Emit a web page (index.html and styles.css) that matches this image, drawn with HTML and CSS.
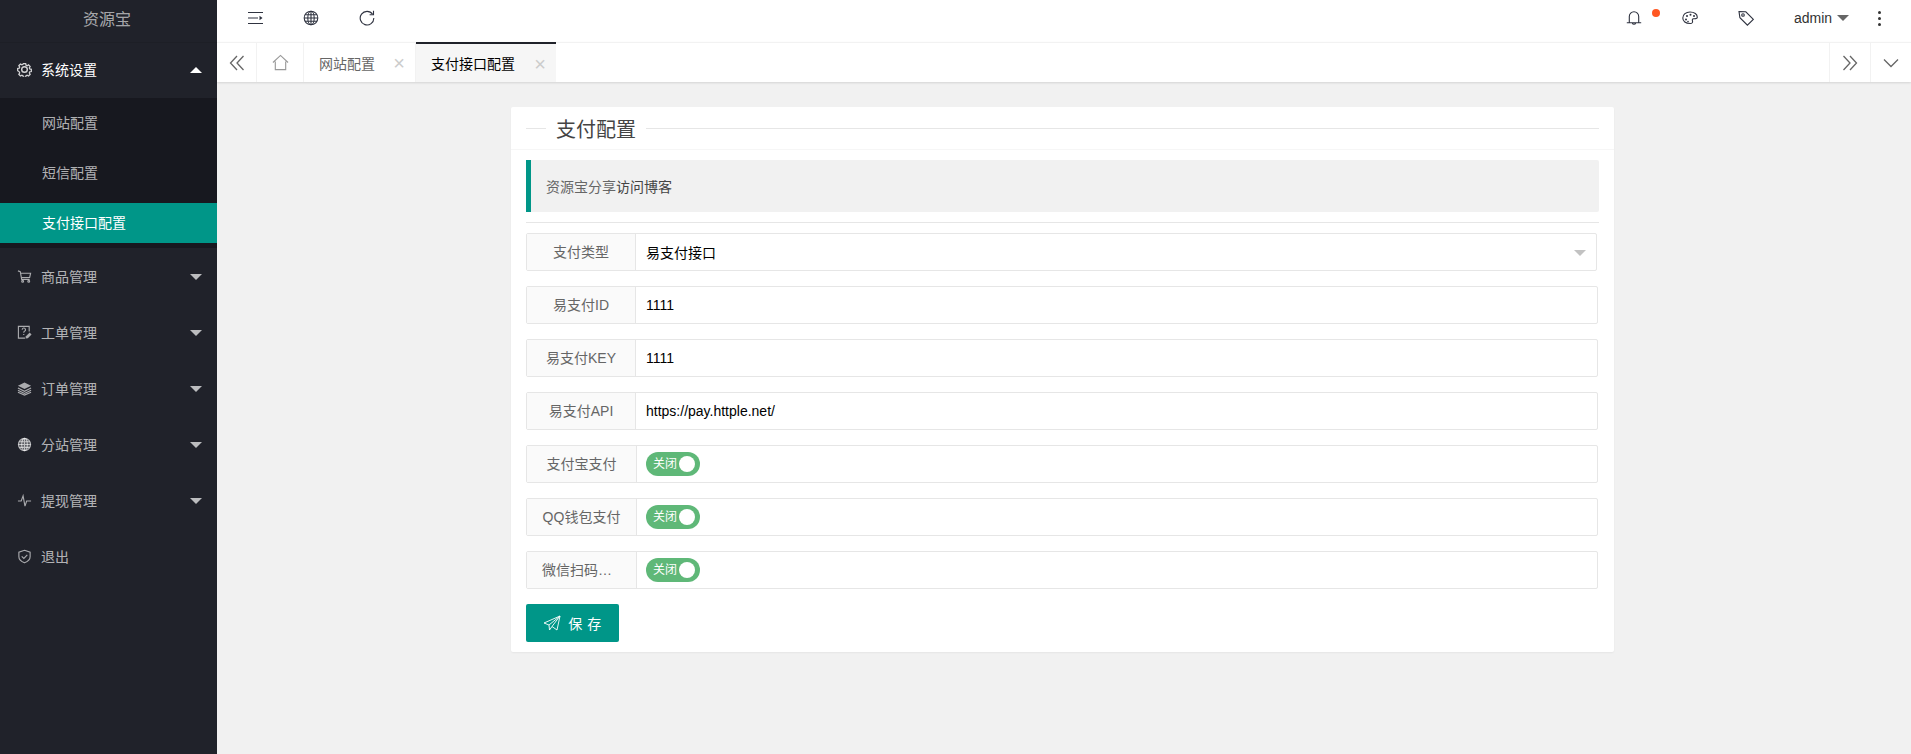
FILE: index.html
```html
<!DOCTYPE html>
<html lang="zh">
<head>
<meta charset="utf-8">
<title>支付接口配置</title>
<link rel="stylesheet" href="styles.css">
</head>
<body>
<div class="app">
  <aside class="side">
    <div class="brand">资源宝</div>
    <nav>
      <div class="nav-item open">
        <svg class="ni gear" viewBox="0 0 16 16"><path d="M6.600 1h2.800l.4 1.900 1.300.6 1.700-1 1.900 2-1 1.600.5 1.300 1.900.4v2.600l-1.900.4-.5 1.300 1 1.600-1.900 2-1.700-1-1.300.6-.4 1.900H6.600l-.4-1.900-1.300-.6-1.700 1-1.900-2 1-1.600-.5-1.300L-.1 9.400V6.800l1.900-.4.5-1.300-1-1.600 1.900-2 1.700 1 1.300-.6z" transform="translate(.8 .8) scale(.9)"/><circle cx="8" cy="8" r="3"/></svg>
        <span>系统设置</span><i class="tri up"></i>
      </div>
      <div class="sub">
        <div class="sub-item">网站配置</div>
        <div class="sub-item">短信配置</div>
        <div class="sub-item active"><span>支付接口配置</span></div>
      </div>
      <div class="nav-item">
        <svg class="ni" viewBox="0 0 16 16"><path d="M1 2l2.500.8L5 11h8.500M4 4.500h10.500L13.500 9H5"/><circle cx="6" cy="13" r="1"/><circle cx="12.500" cy="13" r="1"/></svg>
        <span>商品管理</span><i class="tri"></i>
      </div>
      <div class="nav-item">
        <svg class="ni" viewBox="0 0 16 16"><path d="M8.500 14H1.500V1.500h11.500V7"/><path d="M5.500 5a1.800 1.800 0 1 1 2.500 1.700c-.7.400-.8.800-.8 1.500M7.200 9.500v1.200"/><path class="fill" d="M9 14.500l.5-2.500 4-4 2 2-4 4z"/></svg>
        <span>工单管理</span><i class="tri"></i>
      </div>
      <div class="nav-item">
        <svg class="ni" viewBox="0 0 16 16"><path class="fill" d="M8 1.500l7 3.500-7 3.500L1 5z"/><path d="M1 7.500l7 3.500 7-3.500M1 9.800l7 3.500 7-3.500M1 12l7 3 7-3"/></svg>
        <span>订单管理</span><i class="tri"></i>
      </div>
      <div class="nav-item">
        <svg class="ni" viewBox="0 0 16 16"><circle class="fill-soft" cx="8" cy="8" r="6.500"/><ellipse cx="8" cy="8" rx="3" ry="6.500"/><path d="M1.500 8h13M2.500 5h11M2.500 11h11M8 1.500v13"/></svg>
        <span>分站管理</span><i class="tri"></i>
      </div>
      <div class="nav-item">
        <svg class="ni" viewBox="0 0 16 16"><path d="M1 8.500h3.500L6.500 3l2 11 1.800-5.500H15"/></svg>
        <span>提现管理</span><i class="tri"></i>
      </div>
      <div class="nav-item">
        <svg class="ni" viewBox="0 0 16 16"><path d="M8 1.300l6 2v5c0 3.200-2.800 5.200-6 6.400-3.200-1.200-6-3.200-6-6.400v-5z"/><path d="M5 7.800l2.300 2.200L11 6.300"/></svg>
        <span>退出</span>
      </div>
    </nav>
  </aside>

  <div class="main">
    <header class="top">
      <div class="top-left">
        <svg class="ti" viewBox="0 0 16 16"><path d="M1 2.500h15M1 8h10M1 13.500h15"/><path class="solid" d="M12.500 5.800L15.500 8l-3 2.200z"/></svg>
        <svg class="ti" viewBox="0 0 16 16"><circle cx="8" cy="8" r="6.800"/><ellipse cx="8" cy="8" rx="3.200" ry="6.800"/><path d="M1.200 8h13.600M2.200 4.700h11.600M2.200 11.300h11.600M8 1.200v13.600"/></svg>
        <svg class="ti" viewBox="0 0 16 16"><path d="M13.600 4.300A6.800 6.800 0 1 0 14.800 8"/><path d="M14.500 .8v3.900h-3.900"/></svg>
      </div>
      <div class="top-right">
        <span class="bell">
          <svg class="ti" viewBox="0 0 16 16"><path d="M3.300 12.500V6.500a4.700 4.700 0 0 1 9.400 0v6M.8 12.800h14.400M6.300 13a1.800 1.800 0 0 0 3.400 0"/></svg>
          <i class="dot"></i>
        </span>
        <svg class="ti" viewBox="0 0 16 16"><path d="M8 2c4.500 0 7.300 2.400 7.300 5.200 0 1.800-2.300 1.500-3.800 1.600-1.400.1-1.300 1.300-1 2.200.4 1.300-.3 2.500-2.300 2.500C3.500 13.500 .8 11.300.8 8 .8 4.500 4 2 8 2z"/><circle class="solid" cx="4" cy="9.500" r="1"/><circle class="solid" cx="5" cy="6" r="1"/><circle class="solid" cx="8.500" cy="4.800" r="1"/><circle class="solid" cx="12" cy="6" r="1"/><circle class="solid" cx="6" cy="11.500" r=".8"/></svg>
        <svg class="ti" viewBox="0 0 16 16"><path d="M1 1.500l6.800.3 7.500 7.500-5.900 5.900L1.900 7.700z"/><circle cx="5" cy="5" r="1.300"/></svg>
        <span class="user">admin<i class="caret"></i></span>
        <span class="more"><i></i><i></i><i></i></span>
      </div>
    </header>

    <div class="tabs">
      <button class="tab-btn first" type="button"><svg class="tb" viewBox="0 0 16 16"><path d="M8 1L1.500 8 8 15M14.500 1L8 8l6.500 7"/></svg></button>
      <button class="tab-btn home" type="button"><svg class="th" viewBox="0 0 18 18"><path d="M1 9l8-7.500L17 9M3.500 8v8.500h11V8"/></svg></button>
      <div class="tab"><span>网站配置</span><em>×</em></div>
      <div class="tab current"><span>支付接口配置</span><em>×</em></div>
      <div class="tabs-space"></div>
      <button class="tab-btn edge" type="button"><svg class="tb" viewBox="0 0 16 16"><path d="M1.500 1L8 8l-6.500 7M8 1l6.500 7L8 15"/></svg></button>
      <button class="tab-btn edge" type="button"><svg class="tb" viewBox="0 0 16 16"><path d="M1 4.500l7 7 7-7"/></svg></button>
    </div>

    <main class="content">
      <section class="card">
        <div class="card-head">
          <div class="legend"><span>支付配置</span></div>
        </div>
        <div class="card-body">
          <blockquote class="note">资源宝分享<span class="dark">访问博客</span></blockquote>
          <hr class="rule">
          <div class="row narrow"><label>支付类型</label><div class="val select">易支付接口<i class="sel-tri"></i></div></div>
          <div class="row"><label>易支付ID</label><div class="val">1111</div></div>
          <div class="row"><label>易支付KEY</label><div class="val">1111</div></div>
          <div class="row"><label>易支付API</label><div class="val">https://pay.httple.net/</div></div>
          <div class="row wide"><label>支付宝支付</label><div class="val"><span class="switch">关闭<i></i></span></div></div>
          <div class="row wide"><label>QQ钱包支付</label><div class="val"><span class="switch">关闭<i></i></span></div></div>
          <div class="row wide"><label>微信扫码支付</label><div class="val"><span class="switch">关闭<i></i></span></div></div>
          <button class="save" type="button">
            <svg viewBox="0 0 18 16"><path d="M1 8l16-7-3 14-5-3.500L6.500 15 6 10zM6 10L17 1 9 11.500"/></svg>
            <span>保 存</span>
          </button>
        </div>
      </section>
    </main>
  </div>
</div>
</body>
</html>
```

FILE: styles.css
```css
* { box-sizing: border-box; }
html, body { margin: 0; height: 100%; }
body {
  font-family: "Liberation Sans", "Noto Sans CJK SC", sans-serif;
  font-size: 14px;
  color: #333;
  background: #f1f1f1;
  overflow: hidden;
}
.app { display: flex; height: 754px; }

/* sidebar */
.side { width: 217px; flex: none; background: #20222a; color: #c2c2c2; }
.brand {
  height: 42px;
  display: flex;
  align-items: center;
  justify-content: center;
  padding: 0 3px 6px 0;
  font-size: 16px;
  color: rgba(255, 255, 255, .62);
  box-shadow: 0 1px 0 #1d1f26;
}
.nav-item {
  height: 56px;
  display: flex;
  align-items: center;
  padding-left: 17px;
  position: relative;
  color: rgba(255, 255, 255, .68);
}
.nav-item.open { color: #fff; padding-bottom: 2px; }
.nav-item span { margin-left: 9px; }
.ni {
  width: 15px;
  height: 15px;
  flex: none;
  fill: none;
  stroke: rgba(255, 255, 255, .62);
  stroke-width: 1.200;
}
.ni .fill { fill: rgba(255, 255, 255, .62); stroke: none; }
.ni .fill-soft { fill: rgba(255, 255, 255, .25); }
.open .ni { stroke: rgba(255, 255, 255, .8); stroke-width: 1.500; }
.tri {
  position: absolute;
  right: 15px;
  top: 26px;
  width: 0;
  height: 0;
  border: 6px solid transparent;
  border-bottom-width: 0;
  border-top-color: rgba(255, 255, 255, .7);
}
.tri.up {
  border-top-width: 0;
  border-bottom: 6px solid #fff;
  top: 25px;
}
.sub { background: #17181f; height: 150px; }
.sub-item {
  height: 50px;
  display: flex;
  align-items: center;
  padding: 0 0 2px 42px;
  color: rgba(255, 255, 255, .68);
}
.sub-item.active { padding: 5px 0 5px; }
.sub-item.active span {
  flex: 1;
  height: 40px;
  line-height: 40px;
  padding-left: 42px;
  background: #009688;
  color: #fff;
}

/* main column */
.main { flex: 1; min-width: 0; display: flex; flex-direction: column; }
.top {
  height: 42px;
  flex: none;
  background: #fff;
  display: flex;
  justify-content: space-between;
  align-items: center;
  padding: 0 30px 6px 30px;
}
.top-left { display: flex; gap: 40px; }
.top-right { display: flex; align-items: center; }
.ti {
  width: 16px;
  height: 16px;
  flex: none;
  fill: none;
  stroke: #2f3340;
  stroke-width: 1.100;
  display: block;
}
.ti .solid { fill: #2f3340; stroke: none; }
.bell { position: relative; display: block; margin-right: 40px; }
.dot {
  position: absolute;
  left: 26px;
  top: -1px;
  width: 8px;
  height: 8px;
  border-radius: 50%;
  background: #ff5722;
}
.top-right > .ti:nth-of-type(1) { margin-right: 40px; }
.top-right > .ti:nth-of-type(2) { margin-right: 40px; }
.user { display: flex; align-items: center; color: #333; width: 84px; }
.caret {
  margin-left: 5px;
  width: 0;
  height: 0;
  border: 6px solid transparent;
  border-bottom-width: 0;
  border-top-color: #666;
}
.more { display: flex; flex-direction: column; gap: 3px; width: 3px; }
.more i { width: 3px; height: 3px; border-radius: 50%; background: #333; display: block; }

/* tabs */
.tabs {
  height: 40px;
  flex: none;
  background: #fff;
  display: flex;
  border-top: 1px solid #f2f2f2;
  box-shadow: 0 1px 2px rgba(0, 0, 0, .12);
  position: relative;
}
.tab-btn {
  width: 40px;
  padding: 0;
  background: #fff;
  border: 0;
  border-right: 1px solid #f2f2f2;
  display: flex;
  align-items: center;
  justify-content: center;
}
.tab-btn.first { width: 40px; }
.tab-btn.home { width: 47px; }
.tab-btn.edge { border-right: 0; border-left: 1px solid #f2f2f2; width: 41px; }
.tb { width: 16px; height: 16px; fill: none; stroke: #666; stroke-width: 1.300; }
.th { width: 17px; height: 17px; fill: none; stroke: #999; stroke-width: 1.200; }
.tab {
  display: flex;
  align-items: center;
  width: 112px;
  padding-left: 15px;
  color: #666;
  position: relative;
  border-right: 1px solid #f2f2f2;
}
.tab em {
  position: absolute;
  right: 10px;
  top: 10px;
  font-style: normal;
  font-size: 20px;
  line-height: 20px;
  color: #ccc;
}
.tab.current {
  width: 140px;
  background: #f6f6f6;
  color: #000;
  margin-top: -1px;
  border-top: 2px solid #20222a;
  border-right: 0;
  padding-bottom: 1px;
}
.tabs-space { flex: 1; }

/* content */
.content { flex: 1; padding: 25px 297px 0 294px; }
.card {
  background: #fff;
  border-radius: 2px;
  box-shadow: 0 1px 2px rgba(0, 0, 0, .05);
  height: 545px;
}
.card-head {
  height: 43px;
  padding: 0 15px;
  border-bottom: 1px solid #f6f6f6;
}
.legend {
  height: 42px;
  display: flex;
  align-items: center;
  position: relative;
  font-size: 20px;
  color: #444;
  padding-left: 20px;
}
.legend::before, .legend::after {
  content: "";
  height: 1px;
  background: #e6e6e6;
  position: absolute;
  top: 21px;
}
.legend::before { left: 0; width: 20px; }
.legend::after { left: 120px; right: 0; }
.legend span { padding: 0 10px; margin-left: 0; }
.card-body { padding: 10px 15px 0; }
.note {
  margin: 0;
  height: 52px;
  background: #f1f1f1;
  border-left: 5px solid #009688;
  border-radius: 0 2px 2px 0;
  display: flex;
  align-items: center;
  padding-left: 15px;
  color: #666;
}
.note .dark { color: #444; }
.rule { margin: 10px 0; border: 0; height: 1px; background: #e6e6e6; }
.row {
  height: 38px;
  display: flex;
  margin-bottom: 15px;
  margin-right: 1px;
  border: 1px solid #e6e6e6;
  border-radius: 2px;
}
.row label {
  width: 109px;
  flex: none;
  display: block;
  line-height: 36px;
  text-align: center;
  padding: 0 15px;
  overflow: hidden;
  text-overflow: ellipsis;
  background: #fafafa;
  border-right: 1px solid #e6e6e6;
  color: #666;
  white-space: nowrap;
}
.row.wide label { width: 110px; }
.val {
  flex: 1;
  display: flex;
  align-items: center;
  padding-left: 10px;
  color: #000;
  position: relative;
}
.row.wide .val { padding-left: 9px; }
.row.narrow { margin-right: 2px; }
.sel-tri {
  position: absolute;
  right: 10px;
  top: 16px;
  width: 0;
  height: 0;
  border: 6px solid transparent;
  border-bottom-width: 0;
  border-top-color: #c2c2c2;
}
.switch {
  width: 54px;
  height: 24px;
  border-radius: 12px;
  background: #5fb878;
  color: #fff;
  font-size: 12px;
  line-height: 24px;
  padding-left: 7px;
  position: relative;
  display: block;
}
.switch i {
  position: absolute;
  right: 5px;
  top: 4px;
  width: 16px;
  height: 16px;
  border-radius: 50%;
  background: #fff;
}
.save {
  width: 93px;
  height: 38px;
  background: #009688;
  border: 0;
  border-radius: 2px;
  color: #fff;
  font: inherit;
  display: flex;
  align-items: center;
  justify-content: center;
  gap: 7px;
  padding: 0;
  letter-spacing: .5px;
}
.save svg { width: 18px; height: 16px; fill: none; stroke: #fff; stroke-width: .9; }
```
